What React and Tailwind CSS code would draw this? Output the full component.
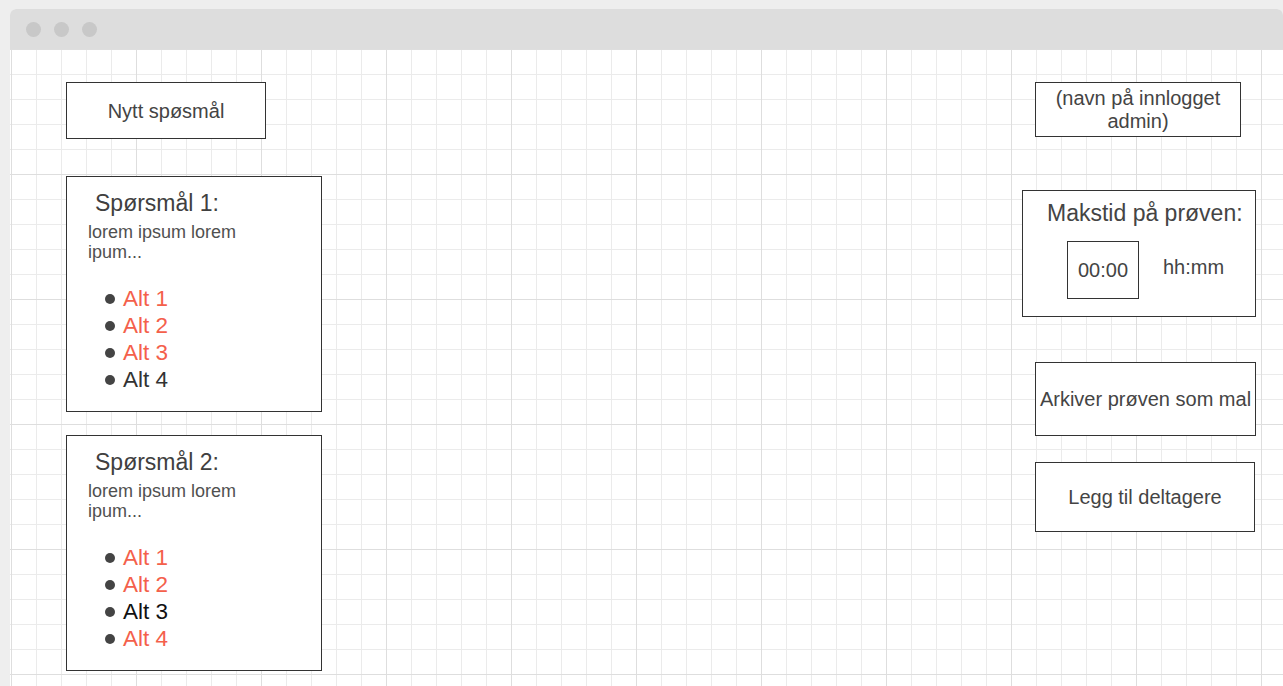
const RED = "text-[#f4604b]";

function Question({ n, alts }) {
  return (
    <div className="w-[256px] h-[236px] border border-[#333] bg-white pt-[13px] shrink-0">
      <div className="pl-[28px] text-[23px] leading-[27px] text-[#404040]">Spørsmål {n}:</div>
      <div className="pl-[21px] mt-[5px] w-[181px] text-[18px] leading-[20px] text-[#505050]">
        lorem ipsum lorem ipum...
      </div>
      <ul className="mt-[23px] pl-[38px]">
        {alts.map((a, i) => (
          <li key={i} className="flex items-center h-[27px] gap-[8px]">
            <span className="w-[10px] h-[10px] rounded-full bg-[#444] shrink-0" />
            <span className={"text-[22.5px] leading-[27px] " + a.cls}>Alt {i + 1}</span>
          </li>
        ))}
      </ul>
    </div>
  );
}

export default function App() {
  return (
    <div className="w-[1283px] h-[686px] overflow-hidden bg-[#eeeeee] pt-[9px] pl-[10px] font-['Liberation_Sans',Arial,sans-serif]">
      <div className="w-[1273px] h-[677px] rounded-t-[6px] overflow-hidden bg-white flex flex-col">
        <div className="h-[40px] shrink-0 bg-[#dddddd] flex items-center gap-[13px] pl-[16px]">
          <span className="w-[15px] h-[15px] rounded-full bg-[#c8c8c8]" />
          <span className="w-[15px] h-[15px] rounded-full bg-[#c8c8c8]" />
          <span className="w-[15px] h-[15px] rounded-full bg-[#c8c8c8]" />
        </div>
        <div className="flex-1 flex justify-between pl-[56px] pt-[33px] pr-[27px] bg-[image:linear-gradient(to_right,#dedede_1px,transparent_1px),linear-gradient(to_bottom,#dedede_1px,transparent_1px),linear-gradient(to_right,#ebebeb_1px,transparent_1px),linear-gradient(to_bottom,#ebebeb_1px,transparent_1px)] bg-[size:125px_125px,125px_125px,25px_25px,25px_25px] bg-[position:1px_0]">
          <div className="flex flex-col">
            <div className="w-[200px] h-[57px] border border-[#333] bg-white flex items-center justify-center text-[20px] text-[#444]">
              Nytt spøsmål
            </div>
            <div className="mt-[37px]">
              <Question
                n={1}
                alts={[{ cls: RED }, { cls: RED }, { cls: RED }, { cls: "text-[#333]" }]}
              />
            </div>
            <div className="mt-[23px]">
              <Question
                n={2}
                alts={[{ cls: RED }, { cls: RED }, { cls: "text-[#111]" }, { cls: RED }]}
              />
            </div>
          </div>
          <div className="flex flex-col w-[234px]">
            <div className="ml-[13px] w-[206px] h-[55px] border border-[#333] bg-white flex items-center justify-center text-center text-[20px] leading-[23px] text-[#444]">
              (navn på innlogget
              <br />
              admin)
            </div>
            <div className="mt-[53px] w-[234px] h-[127px] border border-[#333] bg-white pt-[9px] pl-[24px]">
              <div className="text-[23px] leading-[27px] text-[#444] whitespace-nowrap">Makstid på prøven:</div>
              <div className="flex items-start mt-[14px] ml-[20px]">
                <div className="w-[72px] h-[58px] border border-[#333] flex items-center justify-center text-[20px] text-[#444]">
                  00:00
                </div>
                <div className="ml-[24px] mt-[14px] text-[20px] leading-[24px] text-[#444]">hh:mm</div>
              </div>
            </div>
            <div className="mt-[45px] ml-[13px] w-[221px] h-[74px] border border-[#333] bg-white flex items-center justify-center text-[20px] text-[#444] whitespace-nowrap">
              Arkiver prøven som mal
            </div>
            <div className="mt-[26px] ml-[13px] w-[220px] h-[70px] border border-[#333] bg-white flex items-center justify-center text-[20px] text-[#444]">
              Legg til deltagere
            </div>
          </div>
        </div>
      </div>
    </div>
  );
}
